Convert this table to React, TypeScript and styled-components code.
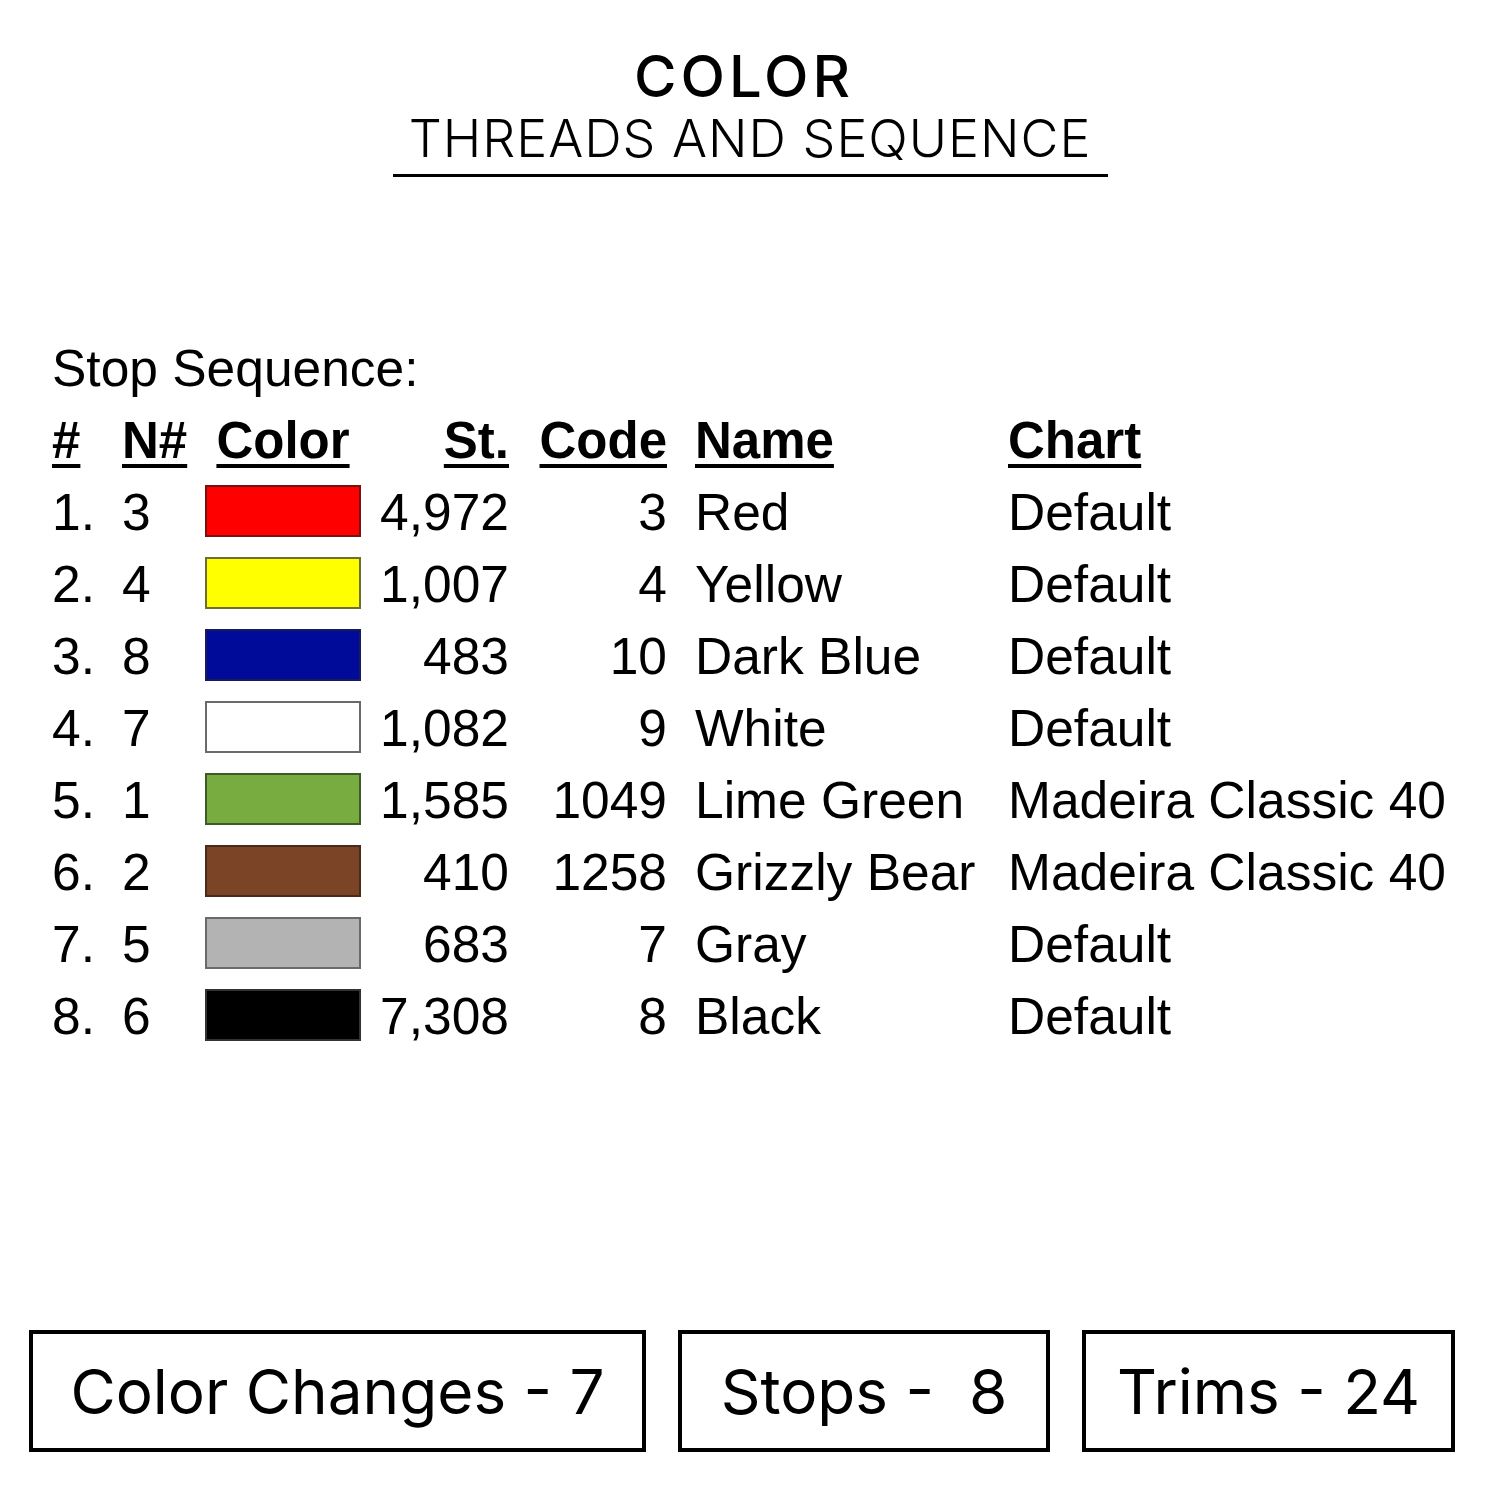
import React from "react";
import styled, { createGlobalStyle } from "styled-components";

const Global = createGlobalStyle`
  html, body { margin: 0; padding: 0; background: #fff; }
  #root { width: 1500px; height: 1500px; }
`;

const Page = styled.div`
  width: 1500px;
  height: 1500px;
  box-sizing: border-box;
  display: flex;
  flex-direction: column;
  background: #fff;
  color: #000;
  padding-top: 46px;
`;

const TitleBlock = styled.header`
  display: flex;
  flex-direction: column;
  align-items: center;
  font-family: Inter, "Noto Sans", sans-serif;
`;

const MainTitle = styled.h1`
  margin: 0 12px 0 0;
  font-size: 58px;
  line-height: 60px;
  font-weight: 500;
  letter-spacing: 4px;
`;

const SubTitle = styled.h2`
  margin: 8px 0 0;
  width: 715px;
  box-sizing: border-box;
  text-align: center;
  font-size: 52px;
  line-height: 50px;
  font-weight: 300;
  letter-spacing: 1px;
  padding-bottom: 10px;
  border-bottom: 3px solid #000;
`;

const Section = styled.section`
  margin: 161px 0 0 52px;
  font-family: "Liberation Sans", Arial, sans-serif;
  font-size: 51.5px;
`;

const Caption = styled.div`
  line-height: 60px;
  margin-bottom: 8px;
`;

const Row = styled.div<{ $head?: boolean }>`
  display: grid;
  grid-template-columns: 70px 83px 156px 148px 158px 341px auto;
  align-items: center;
  height: ${(p) => (p.$head ? "70px" : "72px")};
  line-height: 60px;
  font-weight: ${(p) => (p.$head ? 700 : 400)};
  font-size: ${(p) => (p.$head ? "51px" : "inherit")};
  white-space: nowrap;
`;

const Cell = styled.div<{ $align?: "left" | "right" | "center"; $pad?: number }>`
  text-align: ${(p) => p.$align ?? "left"};
  padding-left: ${(p) => p.$pad ?? 0}px;
`;

const HeadText = styled.span`
  text-decoration: underline;
  text-decoration-thickness: 4px;
  text-underline-offset: 6px;
`;

const Swatch = styled.div<{ $fill: string; $edge: string }>`
  width: 156px;
  height: 52px;
  margin-top: -2px;
  box-sizing: border-box;
  background: ${(p) => p.$fill};
  border: 2px solid ${(p) => p.$edge};
`;

const Footer = styled.footer`
  margin-top: auto;
  padding: 0 0 48px 29px;
  display: flex;
  gap: 32px;
  font-family: Inter, "Noto Sans", sans-serif;
`;

const StatBox = styled.div<{ $w: number }>`
  width: ${(p) => p.$w}px;
  height: 122px;
  box-sizing: border-box;
  border: 4px solid #000;
  display: flex;
  align-items: center;
  justify-content: center;
  font-size: 62px;
  font-weight: 400;
  white-space: pre;
`;

const rows = [
  { n: "1.", nn: "3", fill: "#ff0000", edge: "#7a1010", st: "4,972", code: "3", name: "Red", chart: "Default" },
  { n: "2.", nn: "4", fill: "#ffff00", edge: "#6e6e30", st: "1,007", code: "4", name: "Yellow", chart: "Default" },
  { n: "3.", nn: "8", fill: "#000c99", edge: "#1a1a5a", st: "483", code: "10", name: "Dark Blue", chart: "Default" },
  { n: "4.", nn: "7", fill: "#ffffff", edge: "#6a6a6a", st: "1,082", code: "9", name: "White", chart: "Default" },
  { n: "5.", nn: "1", fill: "#79ac40", edge: "#3c5a2a", st: "1,585", code: "1049", name: "Lime Green", chart: "Madeira Classic 40" },
  { n: "6.", nn: "2", fill: "#7b4426", edge: "#4a2a1a", st: "410", code: "1258", name: "Grizzly Bear", chart: "Madeira Classic 40" },
  { n: "7.", nn: "5", fill: "#b3b3b3", edge: "#6a6a6a", st: "683", code: "7", name: "Gray", chart: "Default" },
  { n: "8.", nn: "6", fill: "#000000", edge: "#333333", st: "7,308", code: "8", name: "Black", chart: "Default" },
];

export default function App() {
  return (
    <>
      <Global />
      <Page>
        <TitleBlock>
          <MainTitle>COLOR</MainTitle>
          <SubTitle>THREADS AND SEQUENCE</SubTitle>
        </TitleBlock>
        <Section>
          <Caption>Stop Sequence:</Caption>
          <Row $head>
            <Cell><HeadText>#</HeadText></Cell>
            <Cell><HeadText>N#</HeadText></Cell>
            <Cell $align="center"><HeadText>Color</HeadText></Cell>
            <Cell $align="right"><HeadText>St.</HeadText></Cell>
            <Cell $align="right"><HeadText>Code</HeadText></Cell>
            <Cell $pad={28}><HeadText>Name</HeadText></Cell>
            <Cell><HeadText>Chart</HeadText></Cell>
          </Row>
          {rows.map((r) => (
            <Row key={r.n}>
              <Cell>{r.n}</Cell>
              <Cell>{r.nn}</Cell>
              <Cell><Swatch $fill={r.fill} $edge={r.edge} /></Cell>
              <Cell $align="right">{r.st}</Cell>
              <Cell $align="right">{r.code}</Cell>
              <Cell $pad={28}>{r.name}</Cell>
              <Cell>{r.chart}</Cell>
            </Row>
          ))}
        </Section>
        <Footer>
          <StatBox $w={617}>Color Changes - 7</StatBox>
          <StatBox $w={372}>{"Stops -  8"}</StatBox>
          <StatBox $w={373}>Trims - 24</StatBox>
        </Footer>
      </Page>
    </>
  );
}
